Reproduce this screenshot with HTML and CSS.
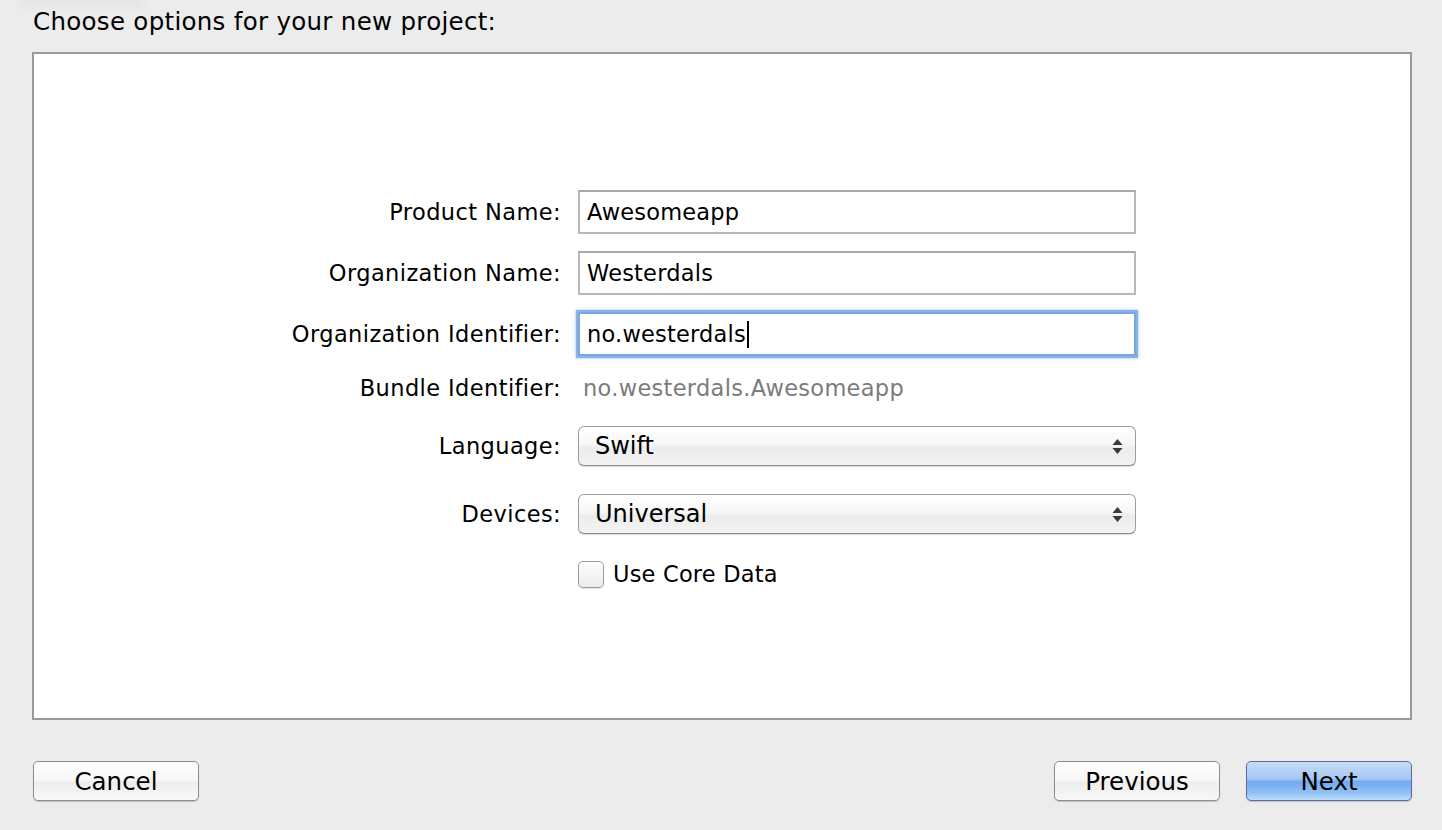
FILE: index.html
```html
<!DOCTYPE html>
<html>
<head>
<meta charset="utf-8">
<link rel="stylesheet" href="styles.css">
</head>
<body>
<div class="sheet">
  <div class="ghost"></div>
  <h1 class="title">Choose options for your new project:</h1>
  <div class="panel">
    <div class="form">
      <div class="row r-field">
        <label class="lbl">Product Name:</label>
        <div class="field">Awesomeapp</div>
      </div>
      <div class="row r-field">
        <label class="lbl">Organization Name:</label>
        <div class="field">Westerdals</div>
      </div>
      <div class="row r-field">
        <label class="lbl">Organization Identifier:</label>
        <div class="field focus">no.westerdals<span class="caret"></span></div>
      </div>
      <div class="row r-bundle">
        <label class="lbl">Bundle Identifier:</label>
        <div class="static">no.westerdals.Awesomeapp</div>
      </div>
      <div class="row r-popup">
        <label class="lbl">Language:</label>
        <div class="popup"><span>Swift</span>
          <svg class="arrows" width="11" height="17" viewBox="0 0 11 17"><path d="M5.5 1 L10.5 7 L0.5 7 Z" fill="#3a3a3a"/><path d="M5.5 16 L10.5 10 L0.5 10 Z" fill="#3a3a3a"/></svg>
        </div>
      </div>
      <div class="row r-popup r-devices">
        <label class="lbl">Devices:</label>
        <div class="popup"><span>Universal</span>
          <svg class="arrows" width="11" height="17" viewBox="0 0 11 17"><path d="M5.5 1 L10.5 7 L0.5 7 Z" fill="#3a3a3a"/><path d="M5.5 16 L10.5 10 L0.5 10 Z" fill="#3a3a3a"/></svg>
        </div>
      </div>
      <div class="row r-check">
        <span class="lbl"></span>
        <div class="check"><span class="box"></span><span class="check-text">Use Core Data</span></div>
      </div>
    </div>
  </div>
  <div class="footer">
    <button class="btn">Cancel</button>
    <div class="right">
      <button class="btn">Previous</button>
      <button class="btn primary">Next</button>
    </div>
  </div>
</div>
</body>
</html>
```
FILE: styles.css
```css
html, body {
  margin: 0;
  padding: 0;
}
body {
  background: #ececec;
  font-family: "DejaVu Sans", "Liberation Sans", sans-serif;
  color: #000;
  width: 1442px;
  height: 830px;
  overflow: hidden;
}
.sheet {
  position: relative;
  padding: 0 30px 0 32px;
}
.ghost {
  position: absolute;
  left: 20px;
  top: -4px;
  width: 125px;
  height: 12px;
  border-radius: 6px;
  background: #e5e5e5;
  filter: blur(3px);
}
.title {
  position: relative;
  margin: 0;
  padding: 6px 0 0 1px;
  height: 52px;
  box-sizing: border-box;
  font-size: 24.5px;
  letter-spacing: 0.3px;
  font-weight: normal;
  line-height: 32px;
}
.panel {
  height: 668px;
  box-sizing: border-box;
  border: 2px solid #9a9a9a;
  background: #fff;
}
.form {
  padding-top: 136px;
  display: flex;
  flex-direction: column;
}
.row {
  display: grid;
  grid-template-columns: 527px 558px;
  column-gap: 17px;
  align-items: center;
}
.lbl {
  text-align: right;
  font-size: 22.5px;
  letter-spacing: 0.4px;
  white-space: nowrap;
}
.r-field { height: 44px; margin-bottom: 17px; }
.field {
  height: 44px;
  box-sizing: border-box;
  border: 2px solid #b8b8b8;
  border-top-color: #a9a9a9;
  background: #fff;
  font-size: 22.5px;
  letter-spacing: 0.2px;
  line-height: 40px;
  padding-left: 7px;
  display: flex;
  align-items: center;
}
.field.focus {
  border-color: #7aa7dd;
  box-shadow: 0 0 1px 2px rgba(110, 160, 225, 0.75), 0 0 4px 2px rgba(130, 175, 230, 0.5);
}
.caret {
  display: inline-block;
  width: 2px;
  height: 27px;
  background: #000;
  margin-left: 1px;
}
.r-bundle { height: 30px; margin-top: 0; margin-bottom: 23px; }
.static {
  font-size: 22.5px;
  letter-spacing: 0.3px;
  color: #7b7b7b;
  padding-left: 5px;
}
.r-popup { height: 40px; margin-bottom: 28px; }
.r-devices { margin-bottom: 26px; }
.popup {
  height: 40px;
  box-sizing: border-box;
  border: 1px solid #9d9d9d;
  border-bottom-color: #8a8a8a;
  border-radius: 6px;
  background: linear-gradient(#ffffff 0%, #f7f7f7 45%, #ececec 55%, #f3f3f3 100%);
  box-shadow: 0 1px 1px rgba(0,0,0,0.15);
  display: flex;
  align-items: center;
  justify-content: space-between;
  padding: 0 12px 0 16px;
  font-size: 24px;
}
.arrows { display: block; }
.r-check { height: 28px; }
.check {
  display: flex;
  align-items: center;
  gap: 9px;
}
.box {
  width: 26px;
  height: 27px;
  box-sizing: border-box;
  border: 1px solid #9a9a9a;
  border-radius: 5px;
  background: linear-gradient(#fdfdfd, #ececec);
  box-shadow: 0 1px 1px rgba(0,0,0,0.12);
}
.check-text { font-size: 22.5px; letter-spacing: 0.2px; }
.footer {
  display: flex;
  justify-content: space-between;
  align-items: center;
  margin-top: 41px;
  padding-left: 1px;
}
.right {
  display: flex;
  gap: 26px;
}
.btn {
  width: 166px;
  height: 40px;
  box-sizing: border-box;
  border: 1px solid #8d8d8d;
  border-radius: 5px;
  background: linear-gradient(#ffffff 0%, #f6f6f6 50%, #ececec 52%, #f8f8f8 100%);
  box-shadow: 0 1px 1px rgba(0,0,0,0.18);
  font-family: "DejaVu Sans", "Liberation Sans", sans-serif;
  font-size: 24.5px;
  color: #000;
  padding: 0;
}
.btn.primary {
  border-color: #5a6d9a;
  background: linear-gradient(#c8dcf8 0%, #a3c6f3 45%, #72a9ee 52%, #8fc0f5 80%, #bcdcfb 100%);
}
```
